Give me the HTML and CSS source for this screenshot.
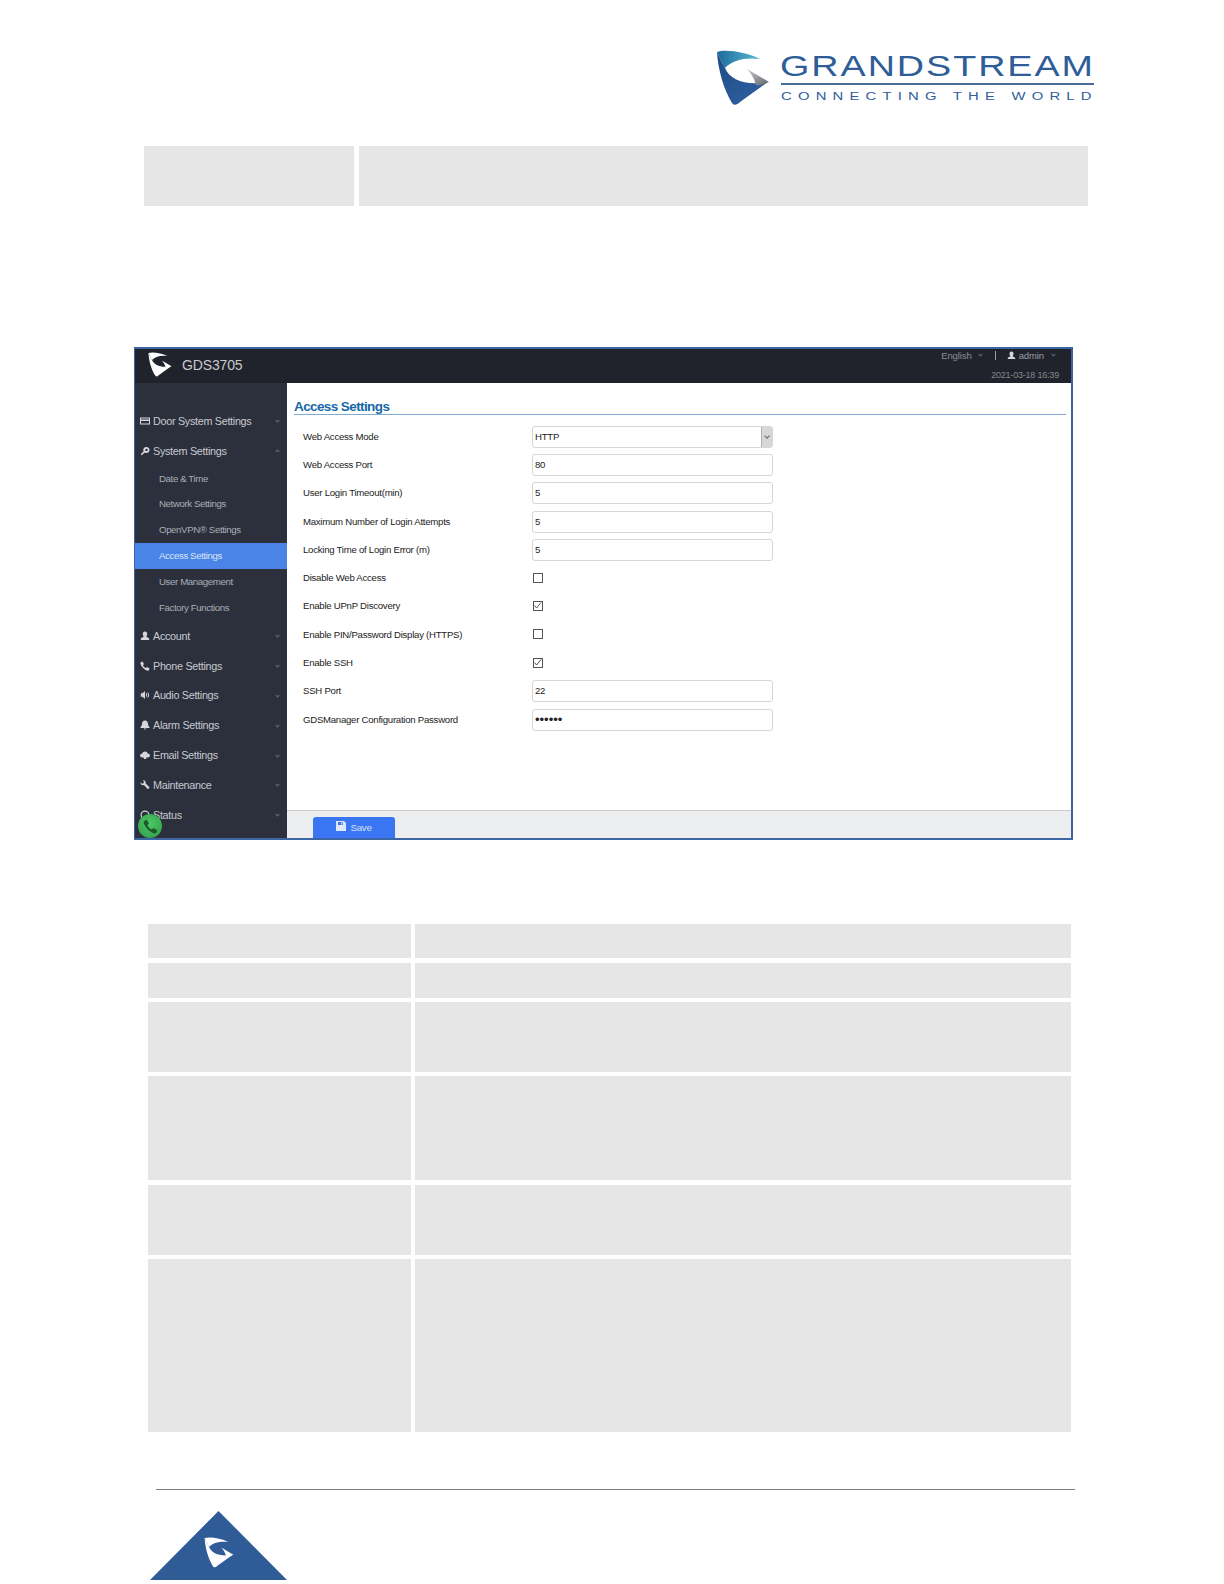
FILE: index.html
```html
<!DOCTYPE html>
<html lang="en">
<head>
<meta charset="utf-8">
<title>GDS3705 Access Settings</title>
<link rel="stylesheet" href="styles.css">
</head>
<body>
<svg class="defs" width="0" height="0" aria-hidden="true">
  <defs>
    <symbol id="mark" viewBox="0 0 54 56">
      <path d="M1 2C10-1 30 2 44 9 30 7 16 10 9 18 6 12 3 7 1 2Z"/>
      <path d="M1 2C3 7 6 12 9 18 14 30 30 36 52 32L24 52C21 55 18 56 16 53 8 40 2 20 1 2Z"/>
      <path d="M31 19L53 32C46 35 42 36 40 35 38 28 35 23 31 19Z"/>
    </symbol>
    <linearGradient id="gBlue" x1="0" y1="0" x2="0.7" y2="1">
      <stop offset="0" stop-color="#1c4a86"/>
      <stop offset="1" stop-color="#2f5f9f"/>
    </linearGradient>
    <linearGradient id="gTeal" x1="1" y1="0.5" x2="0" y2="0.5">
      <stop offset="0" stop-color="#58bcd4"/>
      <stop offset="1" stop-color="#1d6a9c"/>
    </linearGradient>
    <linearGradient id="gGrey" x1="0" y1="0" x2="1" y2="1">
      <stop offset="0" stop-color="#c9ccd0"/>
      <stop offset="1" stop-color="#5f6368"/>
    </linearGradient>
  </defs>
</svg>

<header class="brand">
  <svg class="brand-logo" viewBox="0 0 379 56" width="379" height="56">
    <path fill="url(#gTeal)" d="M1 2C10-1 30 2 44 9 30 7 16 10 9 18 6 12 3 7 1 2Z"/>
    <path fill="url(#gBlue)" d="M1 2C3 7 6 12 9 18 14 30 30 36 52 32L24 52C21 55 18 56 16 53 8 40 2 20 1 2Z"/>
    <path fill="url(#gGrey)" d="M31 19L53 32C46 35 42 36 40 35 38 28 35 23 31 19Z"/>
    <text class="brand-name" x="64" y="26" textLength="315" lengthAdjust="spacingAndGlyphs">GRANDSTREAM</text>
    <rect x="65" y="33" width="313" height="2" fill="#4a6c99"/>
    <text class="brand-tag" transform="translate(65 50) scale(1.35 1)" x="0" y="0" textLength="230" lengthAdjust="spacing">CONNECTING THE WORLD</text>
  </svg>
</header>

<section class="grey-table top-table">
  <div class="cell"></div>
  <div class="cell"></div>
</section>

<section class="app">
  <div class="app-head">
    <div class="app-title">
      <svg class="app-mark" width="24" height="25"><use href="#mark"/></svg>
      <span>GDS3705</span>
    </div>
    <div class="app-meta">
      <div class="meta-top">
        <span>English</span><i class="chev"></i>
        <span class="meta-sep"></span>
        <svg class="ico" viewBox="0 0 10 10" width="9" height="9"><path d="M5 0.5c1.5 0 2.2 1.1 2.2 2.5S6.600 5 6.200 5.600c0 .8 3 1 3 2.400v1H.8v-1c0-1.400 3-1.600 3-2.400C3.400 5 2.800 4.400 2.800 3S3.500.5 5 .5z"/></svg>
        <span class="meta-user">admin</span><i class="chev end"></i>
      </div>
      <div class="meta-date">2021-03-18 16:39</div>
    </div>
  </div>
  <div class="app-body">
    <nav class="side">
      <a class="nav-item"><svg class="ico" viewBox="0 0 10 10"><path fill-rule="evenodd" d="M0 1.500h10v7H0zM1 3.500h8v-1H1zM1 5v2.500h8V5z"/></svg><span>Door System Settings</span><i class="chev"></i></a>
      <a class="nav-item"><svg class="ico" viewBox="0 0 10 10"><path fill-rule="evenodd" d="M6.500 1a3 3 0 1 1-1.800 5.400L1.800 9.300.7 8.200l2.900-2.900A3 3 0 0 1 6.500 1zm0 1.700a1.200 1.200 0 1 0 0 2.400 1.200 1.200 0 0 0 0-2.400z"/></svg><span>System Settings</span><i class="chev up"></i></a>
      <a class="nav-sub">Date &amp; Time</a>
      <a class="nav-sub">Network Settings</a>
      <a class="nav-sub">OpenVPN® Settings</a>
      <a class="nav-sub on">Access Settings</a>
      <a class="nav-sub">User Management</a>
      <a class="nav-sub">Factory Functions</a>
      <a class="nav-item"><svg class="ico" viewBox="0 0 10 10"><path d="M5 .5c1.500 0 2.200 1.100 2.200 2.500S6.600 5 6.200 5.600c0 .8 3 1 3 2.400v1H.8v-1c0-1.400 3-1.600 3-2.400C3.400 5 2.800 4.400 2.800 3S3.500.5 5 .5z"/></svg><span>Account</span><i class="chev"></i></a>
      <a class="nav-item"><svg class="ico" viewBox="0 0 10 10"><path d="M2.500.5 4 3 3 4.200C3.500 5.500 4.500 6.500 5.800 7L7 6l2.500 1.500-.6 1.700c-.3.500-1 .6-1.600.4C4.500 8.800 1.200 5.500.5 2.700.3 2 .5 1.400 1 1.100z"/></svg><span>Phone Settings</span><i class="chev"></i></a>
      <a class="nav-item"><svg class="ico" viewBox="0 0 10 10"><path d="M5 1v8L2.500 6.800H.8V3.200h1.700zM6 2.800c1.500.6 1.500 3.800 0 4.400zM7.700 2.200c2 1.200 2 4.400 0 5.600l-.4-.6c1.200-1 1.200-3.400 0-4.400z"/></svg><span>Audio Settings</span><i class="chev"></i></a>
      <a class="nav-item"><svg class="ico" viewBox="0 0 10 10"><path d="M5 .5c2 0 2.800 1.500 3 3.500.1 1.500.8 2.300 1.500 3v1h-9V7C1.200 6.300 1.900 5.500 2 4 2.200 2 3 .5 5 .5zM3.800 8.500h2.400C6 9.300 5.600 9.600 5 9.600s-1-.3-1.200-1.100z"/></svg><span>Alarm Settings</span><i class="chev"></i></a>
      <a class="nav-item"><svg class="ico" viewBox="0 0 10 10"><path d="M5 1.500c1.500 0 2.400.9 2.700 2C9 3.600 10 4.500 10 5.600 10 6.700 9 7.500 8 7.500H6.200V9H3.800V7.500H2C1 7.500 0 6.700 0 5.600 0 4.500 1 3.700 2.300 3.500 2.600 2.400 3.500 1.500 5 1.500z"/></svg><span>Email Settings</span><i class="chev"></i></a>
      <a class="nav-item"><svg class="ico" viewBox="0 0 10 10"><path d="M3 .3C4.500 0 5.700 1 5.700 2.500c0 .3 0 .6-.1.800L9.600 7.400 8 9.300 3.900 5.100C2 5.600.3 4.300.5 2.200L2 3.700l1.500-.5.400-1.500z"/></svg><span>Maintenance</span><i class="chev"></i></a>
      <a class="nav-item"><svg class="ico" viewBox="0 0 10 10"><path fill-rule="evenodd" d="M5 .5a4.500 4.500 0 1 1 0 9 4.500 4.500 0 0 1 0-9zm0 1.200a3.300 3.300 0 1 0 0 6.600 3.300 3.300 0 0 0 0-6.600z"/></svg><span>Status</span><i class="chev"></i></a>
    </nav>
    <main class="panel">
      <div class="panel-main">
        <h1 class="panel-title">Access Settings</h1>
        <div class="form">
          <div class="row"><label>Web Access Mode</label><div class="field select"><span>HTTP</span><b class="select-btn"><i class="chev"></i></b></div></div>
          <div class="row"><label>Web Access Port</label><div class="field">80</div></div>
          <div class="row"><label>User Login Timeout(min)</label><div class="field">5</div></div>
          <div class="row"><label>Maximum Number of Login Attempts</label><div class="field">5</div></div>
          <div class="row"><label>Locking Time of Login Error (m)</label><div class="field">5</div></div>
          <div class="row"><label>Disable Web Access</label><span class="check"></span></div>
          <div class="row"><label>Enable UPnP Discovery</label><span class="check"><svg viewBox="0 0 9 9" width="9" height="9"><path d="M1.500 4.500 3.600 7 8 1.500" fill="none" stroke="#555" stroke-width="1"/></svg></span></div>
          <div class="row"><label>Enable PIN/Password Display (HTTPS)</label><span class="check"></span></div>
          <div class="row"><label>Enable SSH</label><span class="check"><svg viewBox="0 0 9 9" width="9" height="9"><path d="M1.500 4.500 3.600 7 8 1.500" fill="none" stroke="#555" stroke-width="1"/></svg></span></div>
          <div class="row"><label>SSH Port</label><div class="field">22</div></div>
          <div class="row"><label>GDSManager Configuration Password</label><div class="field dots">••••••</div></div>
        </div>
      </div>
      <div class="panel-foot">
        <button class="save" type="button"><svg viewBox="0 0 10 10" width="10" height="10"><path fill="#dfe8fb" fill-rule="evenodd" d="M0 0h8l2 2v8H0zM2 1v3h5V1zM5 1.500h1.300v2H5z"/></svg><span>Save</span></button>
      </div>
    </main>
  </div>
  <div class="call">
    <svg viewBox="0 0 10 10" width="15" height="15"><path fill="#1f5a2e" d="M2.500.5 4 3 3 4.200C3.500 5.500 4.500 6.500 5.800 7L7 6l2.500 1.500-.6 1.700c-.3.500-1 .6-1.600.4C4.500 8.800 1.200 5.500.5 2.700.3 2 .5 1.400 1 1.100z"/></svg>
  </div>
</section>

<section class="grey-table bottom-table">
  <div class="cell h34 tail"></div><div class="cell h34 tail"></div>
  <div class="cell h35"></div><div class="cell h35"></div>
  <div class="cell h70"></div><div class="cell h70"></div>
  <div class="cell h104 tail"></div><div class="cell h104 tail"></div>
  <div class="cell h70"></div><div class="cell h70"></div>
  <div class="cell h173"></div><div class="cell h173"></div>
</section>

<footer class="foot">
  <div class="foot-rule"></div>
  <div class="foot-tri">
    <svg class="tri" viewBox="0 0 137 69" width="137" height="69"><path d="M68.500 0 137 69H0z" fill="#2f5b96"/></svg>
    <svg class="tri-mark" width="30" height="31"><use href="#mark"/></svg>
  </div>
</footer>
</body>
</html>
```

FILE: styles.css
```css
* { box-sizing: border-box; }
html, body { margin: 0; padding: 0; }
body {
  width: 1224px;
  height: 1584px;
  overflow: hidden;
  background: #fff;
  font-family: "Liberation Sans", Arial, sans-serif;
  color: #333;
}
.defs { position: absolute; }

/* page header */
.brand { height: 146px; padding: 50px 0 0 716px; }
.brand-logo { display: block; }
.brand-name { font-size: 29px; letter-spacing: 1.500px; fill: #2f5d98; }
.brand-tag { font-size: 11px; fill: #2f5d98; }

/* grey document tables */
.grey-table { display: grid; }
.cell { background: #e6e6e6; }
.top-table { margin-left: 144px; width: 944px; height: 60px; grid-template-columns: 210px 1fr; column-gap: 5px; }
.bottom-table {
  margin: 84px 0 0 148px;
  width: 923px;
  grid-template-columns: 263px 656px;
  column-gap: 4px;
  row-gap: 4px;
}
.h34 { height: 34px; }
.h35 { height: 35px; }
.h70 { height: 70px; }
.h104 { height: 104px; }
.h173 { height: 173px; }
.tail { margin-bottom: 1px; }

/* screenshot of the web UI */
.app {
  position: relative;
  margin: 141px 0 0 134px;
  width: 939px;
  height: 493px;
  border: 2px solid #3b66a3;
  border-left-width: 1px;
  display: flex;
  flex-direction: column;
}
.app-head {
  height: 34px;
  flex: none;
  background: #20232b;
  display: flex;
  justify-content: space-between;
}
.app-title {
  display: flex;
  align-items: center;
  gap: 10px;
  padding: 0 0 3px 13px;
  font-size: 14px;
  letter-spacing: -0.150px;
  color: #c8cacd;
}
.app-mark { fill: #fff; display: block; }
.app-meta {
  padding-right: 12px;
  font-size: 9px;
  color: #83868c;
  display: flex;
  flex-direction: column;
  align-items: flex-end;
}
.meta-top {
  display: flex;
  align-items: center;
  height: 12px;
  margin-right: 4px;
  white-space: nowrap;
  font-size: 9.500px;
  letter-spacing: -0.100px;
  color: #8b8e94;
}
.meta-top .chev { margin: 0 13px 2px 7px; }
.meta-top .chev.end { margin: 0 0 2px 8px; }
.meta-top .ico { margin-right: 3px; width: 9px; height: 9px; }
.meta-user { color: #9a9da3; }
.meta-sep { width: 1px; height: 9px; background: #9a9da3; margin-right: 11px; }
.meta-date { margin-top: 9px; white-space: nowrap; letter-spacing: -0.200px; }

.app-body { flex: 1; display: flex; min-height: 0; }
.side {
  width: 152px;
  flex: none;
  background: #2b303c;
  padding-top: 23px;
  color: #c7cad0;
  overflow: hidden;
}
.nav-item {
  height: 29.800px;
  display: flex;
  align-items: center;
  padding: 0 8px 0 5px;
  font-size: 10.800px;
  letter-spacing: -0.300px;
  white-space: nowrap;
}
.nav-item span { flex: 1; margin-left: 3px; }
.ico { width: 10px; height: 10px; fill: #d5d7db; flex: none; }
.nav-sub {
  display: flex;
  align-items: center;
  height: 25.900px;
  padding: 0 0 1px 24px;
  font-size: 9.700px;
  letter-spacing: -0.400px;
  color: #a9adb5;
}
.nav-sub.on { background: #4a84e6; color: #d8e4f8; }
.chev {
  display: block;
  width: 3px;
  height: 3px;
  border-right: 1px solid #6e727a;
  border-bottom: 1px solid #6e727a;
  transform: rotate(45deg);
  flex: none;
}
.chev.up { transform: rotate(225deg); margin-top: 2px; }

.panel { flex: 1; display: flex; flex-direction: column; background: #fff; min-width: 0; }
.panel-main { flex: 1; padding: 15px 5px 0 7px; }
.panel-title {
  margin: 0;
  height: 17px;
  font-size: 13.500px;
  line-height: 18px;
  letter-spacing: -0.600px;
  font-weight: bold;
  color: #1767a8;
  border-bottom: 1px solid #7eabd2;
}
.form { margin-top: 7px; padding-left: 9px; }
.row {
  height: 28.300px;
  display: flex;
  align-items: center;
  font-size: 9.600px;
  letter-spacing: -0.250px;
  color: #222;
}
.row label { width: 229px; flex: none; white-space: nowrap; }
.field {
  width: 241px;
  height: 22px;
  margin-top: 1px;
  border: 1px solid #d4d6d8;
  border-radius: 3px;
  padding: 0 0 1px 2px;
  display: flex;
  align-items: center;
  color: #222;
}
.dots { font-size: 13px; letter-spacing: 0; }
.select { justify-content: space-between; padding-bottom: 0; }
.select-btn {
  width: 11px;
  height: 20px;
  background: #d5d7d9;
  border-left: 1px solid #b0b2b5;
  display: flex;
  align-items: center;
  justify-content: center;
}
.select-btn .chev { width: 4px; height: 4px; border-color: #666; margin-bottom: 2px; }
.check {
  width: 10px;
  height: 10px;
  margin-left: 1px;
  border: 1px solid #555;
  display: block;
  position: relative;
}
.check svg { position: absolute; left: -1px; top: -1px; display: block; }
.panel-foot {
  height: 28px;
  flex: none;
  background: #eceef0;
  border-top: 1px solid #c9cbcd;
  padding: 6px 0 0 26px;
}
.save {
  width: 82px;
  height: 21px;
  padding: 0;
  border: 0;
  border-radius: 3px 3px 0 0;
  background: #3a76f4;
  color: #d6e2fb;
  font: 9.800px "Liberation Sans", Arial, sans-serif;
  letter-spacing: -0.300px;
  display: flex;
  align-items: center;
  justify-content: center;
  gap: 4px;
}
.save svg { margin-bottom: 3px; }
.call {
  position: absolute;
  left: 3px;
  bottom: 0;
  width: 24px;
  height: 24px;
  border-radius: 50%;
  background: radial-gradient(circle at 50% 40%, #4cc766, #2f9c48);
  display: flex;
  align-items: center;
  justify-content: center;
}

/* page footer */
.foot { margin: 57px 0 0 0; }
.foot-rule { margin-left: 156px; width: 919px; height: 1px; background: #808080; }
.foot-tri { position: relative; margin: 21px 0 0 150px; width: 137px; height: 69px; }
.tri { display: block; }
.tri-mark { position: absolute; left: 54px; top: 26px; fill: #fff; }
```
